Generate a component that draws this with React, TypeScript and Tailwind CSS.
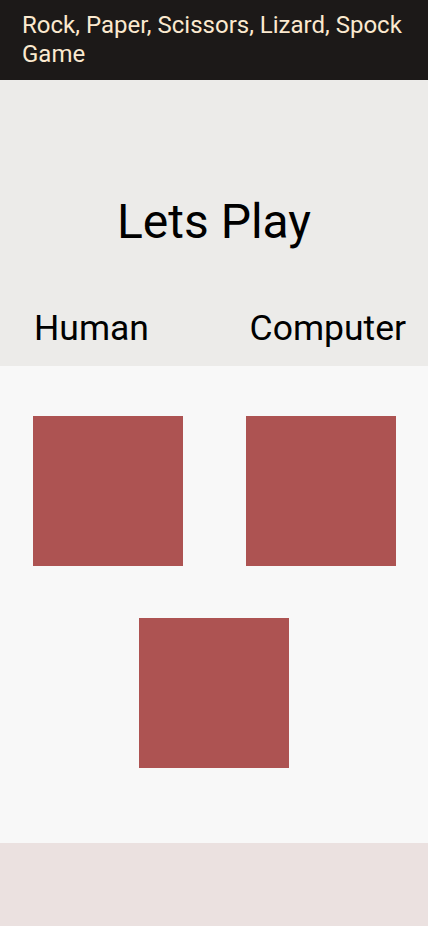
import React from 'react';

function Square() {
  return <div className="w-[150px] h-[150px] bg-[#ad5352]" />;
}

export default function App() {
  return (
    <div className="min-h-[926px] flex flex-col bg-[#ebe1e0]" style={{ fontFamily: 'Roboto, "Noto Sans", sans-serif' }}>
      <header className="h-[80px] bg-[#1c1918] px-[22px] pt-[11px]">
        <h1 className="text-[24px] leading-[29px] text-[#fbe9cf]">Rock, Paper, Scissors, Lizard, Spock Game</h1>
      </header>

      <section className="h-[286px] bg-[#ecebe9] flex flex-col">
        <h2 className="mt-[112px] text-center text-[48px] leading-[60px] text-black">Lets Play</h2>
        <div className="mt-[54px] flex justify-between pl-[34px] pr-[22px] text-[35.5px] leading-[44px] text-black">
          <span>Human</span>
          <span>Computer</span>
        </div>
      </section>

      <section className="h-[477px] bg-[#f8f8f8] flex flex-col">
        <div className="mt-[50px] flex justify-between pl-[33px] pr-[32px]">
          <Square />
          <Square />
        </div>
        <div className="mt-[52px] flex justify-center">
          <Square />
        </div>
      </section>
    </div>
  );
}
